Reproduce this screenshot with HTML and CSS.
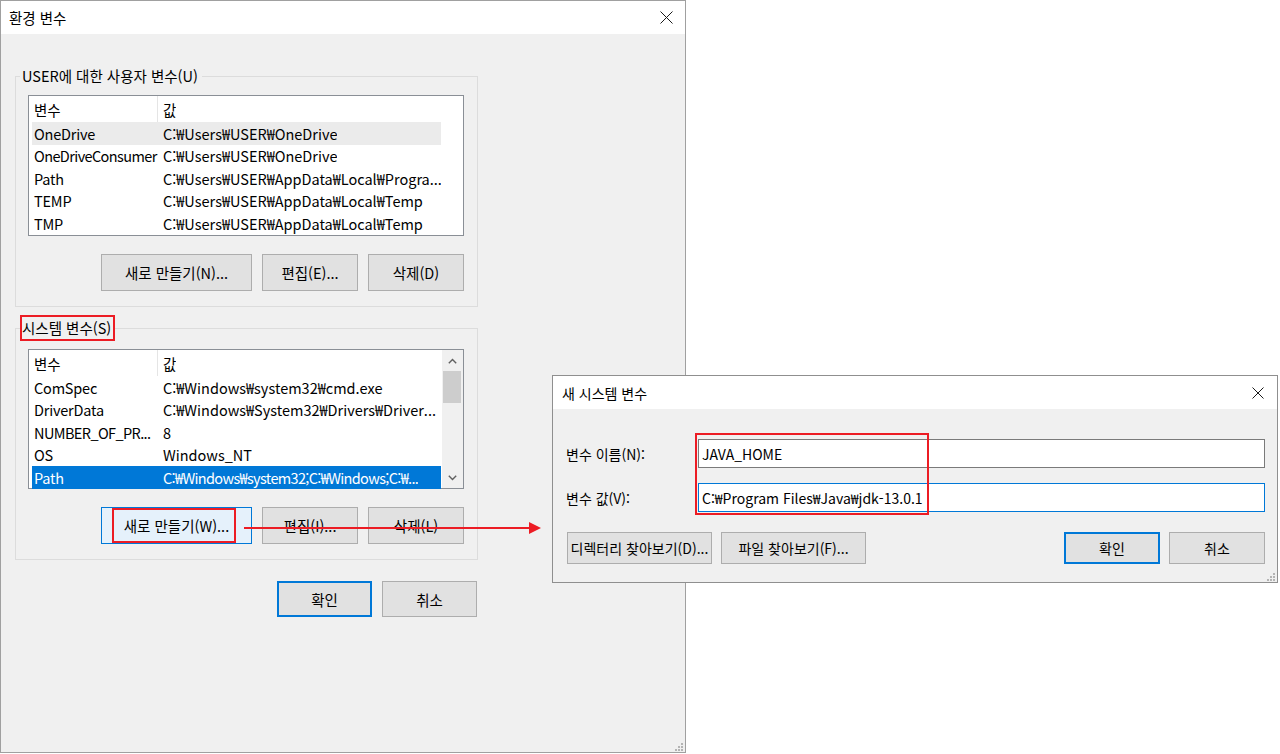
FILE: index.html
```html
<!DOCTYPE html>
<html lang="ko">
<head>
  <meta charset="UTF-8" />
  <title>환경 변수</title>
  <link rel="stylesheet" href="styles.css">
</head>
<body>

  <div class="window env">
    <div class="titlebar">
      <span class="title">환경 변수</span>
      <svg class="close" width="13" height="13" viewBox="0 0 13 13"><path d="M0.5 0.5L12.5 12.5M12.5 0.5L0.5 12.5" stroke="#1a1a1a" stroke-width="1"/></svg>
    </div>

    <div class="env-body">
      <fieldset class="group">
        <legend>USER에 대한 사용자 변수(U)</legend>
        <div class="list">
          <div class="list-body">
            <div class="list-head"><span class="c1">변수</span><span class="c2">값</span></div>
            <div class="row hot"><span class="c1">OneDrive</span><span class="c2">C:₩Users₩USER₩OneDrive</span></div>
            <div class="row"><span class="c1 tight">OneDriveConsumer</span><span class="c2">C:₩Users₩USER₩OneDrive</span></div>
            <div class="row"><span class="c1">Path</span><span class="c2">C:₩Users₩USER₩AppData₩Local₩Progra...</span></div>
            <div class="row"><span class="c1">TEMP</span><span class="c2">C:₩Users₩USER₩AppData₩Local₩Temp</span></div>
            <div class="row"><span class="c1">TMP</span><span class="c2">C:₩Users₩USER₩AppData₩Local₩Temp</span></div>
          </div>
        </div>
        <div class="btn-row">
          <button class="btn wide">새로 만들기(N)...</button>
          <button class="btn">편집(E)...</button>
          <button class="btn">삭제(D)</button>
        </div>
      </fieldset>

      <fieldset class="group marked">
        <legend>시스템 변수(S)</legend>
        <div class="list short">
          <div class="list-body">
            <div class="list-head"><span class="c1">변수</span><span class="c2">값</span></div>
            <div class="row"><span class="c1">ComSpec</span><span class="c2">C:₩Windows₩system32₩cmd.exe</span></div>
            <div class="row"><span class="c1">DriverData</span><span class="c2">C:₩Windows₩System32₩Drivers₩Driver...</span></div>
            <div class="row"><span class="c1 tight">NUMBER_OF_PR...</span><span class="c2">8</span></div>
            <div class="row"><span class="c1">OS</span><span class="c2">Windows_NT</span></div>
            <div class="row sel"><span class="c1">Path</span><span class="c2 tight">C:₩Windows₩system32;C:₩Windows;C:₩...</span></div>
          </div>
          <div class="scroll">
            <div class="arrow"><svg width="9" height="6" viewBox="0 0 9 6"><path d="M0.8 5.2L4.5 1.5L8.2 5.2" fill="none" stroke="#606060" stroke-width="1.4"/></svg></div>
            <div class="thumb"></div>
            <div class="track"></div>
            <div class="arrow"><svg width="9" height="6" viewBox="0 0 9 6"><path d="M0.8 0.8L4.5 4.5L8.2 0.8" fill="none" stroke="#606060" stroke-width="1.4"/></svg></div>
          </div>
        </div>
        <div class="btn-row">
          <button class="btn wide hover">새로 만들기(W)...<span class="mark"></span></button>
          <button class="btn">편집(I)...</button>
          <button class="btn">삭제(L)</button>
        </div>
      </fieldset>

      <div class="actions">
        <button class="btn default">확인</button>
        <button class="btn">취소</button>
      </div>
    </div>

    <svg class="grip" width="8" height="8" viewBox="0 0 8 8"><path d="M6 0h2v2h-2zM3 3h2v2h-2zM6 3h2v2h-2zM0 6h2v2h-2zM3 6h2v2h-2zM6 6h2v2h-2z" fill="#b4b4b4"/></svg>
  </div>

  <svg class="arrow-note" width="300" height="14" viewBox="0 0 300 14">
    <path d="M0 7H287" stroke="#ec1c24" stroke-width="2"/>
    <path d="M285 1L297 7L285 13Z" fill="#ec1c24"/>
  </svg>

  <div class="window newvar">
    <div class="titlebar">
      <span class="title">새 시스템 변수</span>
      <svg class="close" width="12" height="12" viewBox="0 0 12 12"><path d="M0.5 0.5L11.5 11.5M11.5 0.5L0.5 11.5" stroke="#1a1a1a" stroke-width="1"/></svg>
    </div>

    <div class="form">
      <label>변수 이름(N):</label>
      <div class="field">JAVA_HOME</div>
      <label>변수 값(V):</label>
      <div class="field focus">C:₩Program Files₩Java₩jdk-13.0.1</div>
    </div>

    <div class="dlg-buttons">
      <button class="btn browse">디렉터리 찾아보기(D)...</button>
      <button class="btn browse">파일 찾아보기(F)...</button>
      <span class="spacer"></span>
      <button class="btn small default">확인</button>
      <button class="btn small">취소</button>
    </div>

    <div class="note-box"></div>
    <svg class="grip" width="8" height="8" viewBox="0 0 8 8"><path d="M6 0h2v2h-2zM3 3h2v2h-2zM6 3h2v2h-2zM0 6h2v2h-2zM3 6h2v2h-2zM6 6h2v2h-2z" fill="#b4b4b4"/></svg>
  </div>

</body>
</html>
```

FILE: styles.css
```css
* {
  margin: 0;
  padding: 0;
  box-sizing: border-box;
}

body {
  width: 1280px;
  height: 754px;
  position: relative;
  overflow: hidden;
  background: #fff;
  font-family: "Noto Sans CJK KR", sans-serif;
  font-size: 14px;
  color: #000;
}

/* windows */

.window {
  position: absolute;
  background: #f0f0f0;
  border: 1px solid #a0a0a0;
}

.env {
  left: 0;
  top: 0;
  width: 686px;
  height: 753px;
  font-size: 14.5px;
}

.newvar {
  left: 552px;
  top: 375px;
  width: 726px;
  height: 208px;
  border-color: #8f8f8f;
}

.titlebar {
  height: 33px;
  background: #fff;
  display: flex;
  align-items: center;
  justify-content: space-between;
  padding: 0 12px 0 8px;
}

.newvar .titlebar {
  padding: 0 13px 0 9px;
}

.grip {
  position: absolute;
  right: 2px;
  bottom: 1px;
}

/* environment dialog */

.env-body {
  padding: 29px 0 0 14px;
}

.group {
  width: 463px;
  min-width: 0;
  border: 1px solid #dcdcdc;
  padding: 0 13px 15px 12px;
}

.group + .group {
  margin-top: 8px;
}

.group legend {
  margin-left: -8px;
  padding: 0 2px 0 0;
  line-height: 22px;
  border: 2px solid transparent;
}

.group.marked legend {
  border-color: #ec1c24;
}

.list {
  margin-top: 6px;
  height: 141px;
  border: 1px solid #8a8f96;
  background: #fff;
  display: flex;
}

.list.short {
  margin-top: 8px;
  height: 140px;
}

.list-body {
  width: 412px;
  padding-left: 3px;
}

.list-head {
  height: 26px;
  display: flex;
  align-items: center;
}

.list-head .c1 {
  height: 100%;
  display: flex;
  align-items: center;
  border-right: 1px solid #e5e5e5;
}

.row {
  height: 22.5px;
  display: flex;
  align-items: center;
  white-space: nowrap;
}

.c1 {
  width: 126px;
  flex: none;
  padding-left: 2px;
  letter-spacing: -0.2px;
  white-space: nowrap;
}

.c2 {
  padding-left: 5px;
  overflow: hidden;
}

.c1.tight {
  letter-spacing: -0.6px;
}

.c2.tight {
  letter-spacing: -0.65px;
}

.row.hot {
  background: #ebebeb;
}

.row.sel {
  background: #0078d7;
  color: #fff;
}

.scroll {
  width: 21px;
  margin-left: 1px;
  background: #f0f0f0;
  display: flex;
  flex-direction: column;
}

.scroll .arrow {
  height: 21px;
  display: flex;
  align-items: center;
  justify-content: center;
}

.scroll .thumb {
  height: 32px;
  margin: 0 2px 0 1px;
  background: #cdcdcd;
}

.scroll .track {
  flex: 1;
}

.btn-row,
.actions {
  display: flex;
  justify-content: flex-end;
  gap: 10px;
}

.btn-row {
  margin-top: 18px;
}

.actions {
  width: 463px;
  margin-top: 21px;
  padding-right: 1px;
}

.btn {
  width: 96px;
  height: 37px;
  background: #e1e1e1;
  border: 1px solid #adadad;
  font: inherit;
  color: #000;
  position: relative;
}

.btn.wide {
  width: 151px;
}

.btn.hover {
  background: #e5f1fb;
  border-color: #0078d7;
}

.btn .mark {
  position: absolute;
  top: 0;
  bottom: 0;
  left: 10px;
  width: 124px;
  border: 2px solid #ec1c24;
}

.actions .btn {
  width: 95px;
  height: 36px;
}

.btn.default {
  border: 2px solid #0078d7;
}

/* new variable dialog */

.form {
  display: grid;
  grid-template-columns: 132px 1fr;
  row-gap: 15px;
  align-items: center;
  padding: 30px 12px 0 13px;
}

.field {
  height: 29px;
  background: #fff;
  border: 1px solid #7a7a7a;
  padding-left: 3px;
  display: flex;
  align-items: center;
  white-space: nowrap;
}

.field.focus {
  border-color: #0078d7;
}

.dlg-buttons {
  display: flex;
  gap: 9px;
  padding: 20px 12px 0 14px;
}

.dlg-buttons .btn {
  height: 32px;
}

.btn.browse {
  width: 145px;
}

.spacer {
  flex: 1;
}

.note-box {
  position: absolute;
  left: 142px;
  top: 57px;
  width: 234px;
  height: 82px;
  border: 2px solid #ec1c24;
}

.arrow-note {
  position: absolute;
  left: 244px;
  top: 521px;
}
```
